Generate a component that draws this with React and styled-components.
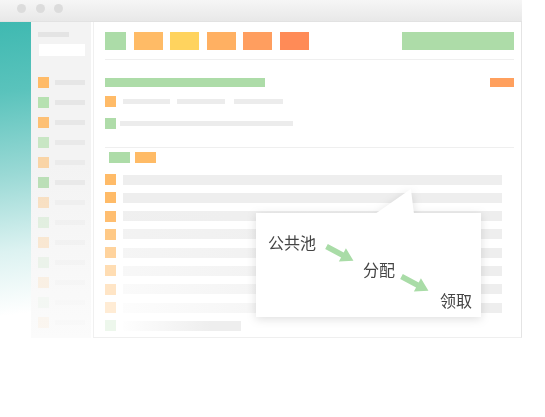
import React from "react";
import styled, { createGlobalStyle } from "styled-components";

const Global = createGlobalStyle`
  html, body { margin: 0; padding: 0; background: #fff; }
  body { font-family: "Noto Sans CJK SC", "Noto Sans", sans-serif; }
`;

const Window = styled.div`
  position: relative;
  width: 522px;
  height: 338px;
  display: flex;
  flex-direction: column;
`;

const TitleBar = styled.div`
  flex: none;
  height: 22px;
  box-sizing: border-box;
  display: flex;
  align-items: flex-start;
  gap: 9.5px;
  padding: 4px 0 0 17px;
  background: linear-gradient(#f6f6f6, #e8e8e8);
  border-bottom: 1px solid #e2e2e2;
`;

const Dot = styled.span`
  width: 9px;
  height: 9px;
  border-radius: 50%;
  background: #dcdcdc;
`;

const Body = styled.div`
  flex: 1;
  display: flex;
  min-height: 0;
`;

const Teal = styled.div`
  width: 31px;
  flex: none;
  background: linear-gradient(172deg, #3fb9b1 0%, #5ac3bc 22%, #9ad9d5 48%, #dcf2f1 72%, #ffffff 92%);
`;

const Sidebar = styled.div`
  width: 60px;
  flex: none;
  box-sizing: border-box;
  padding: 10px 6px 0 7px;
  display: flex;
  flex-direction: column;
  background: linear-gradient(#f3f3f3 45%, #fbfbfb 100%);
`;

const SideLabel = styled.div`
  width: 31px;
  height: 5px;
  background: #e4e4e4;
`;

const SideInput = styled.div`
  width: 46px;
  height: 12px;
  margin: 7px 0 0 1px;
  background: #fff;
`;

const SideList = styled.div`
  margin-top: 21px;
  display: flex;
  flex-direction: column;
  gap: 9px;
`;

const SideItem = styled.div`
  display: flex;
  align-items: center;
  gap: 6px;
  height: 11px;
  opacity: ${(p) => p.$alpha};
`;

const Square = styled.span`
  flex: none;
  width: 11px;
  height: 11px;
  background: ${(p) => p.$color};
  opacity: ${(p) => (p.$alpha == null ? 1 : p.$alpha)};
`;

const SideLine = styled.span`
  width: 30px;
  height: 5px;
  background: #e6e6e6;
`;

const Content = styled.div`
  flex: 1;
  margin-left: 2px;
  box-sizing: border-box;
  background: #fff;
  border-left: 1px solid #f0f0f0;
  border-right: 1px solid #e4e4e4;
  border-bottom: 1px solid #efefef;
  padding: 10px 7px 0 11px;
  display: flex;
  flex-direction: column;
`;

const Toolbar = styled.div`
  display: flex;
  gap: 7.5px;
  height: 18px;
`;

const ToolButton = styled.span`
  width: ${(p) => p.$w}px;
  height: 18px;
  background: ${(p) => p.$color};
  margin-left: ${(p) => (p.$push ? "auto" : "0")};
`;

const Divider = styled.div`
  height: 1px;
  background: #efefef;
  margin-top: ${(p) => p.$mt}px;
`;

const SummaryRow = styled.div`
  display: flex;
  justify-content: space-between;
  margin-top: 18px;
  height: 9px;
`;

const Bar = styled.span`
  width: ${(p) => p.$w}px;
  height: ${(p) => p.$h || 9}px;
  background: ${(p) => p.$color};
`;

const InfoRow = styled.div`
  display: flex;
  align-items: center;
  height: 11px;
  margin-top: ${(p) => p.$mt}px;
  gap: ${(p) => p.$gap}px;
`;

const InfoLine = styled.span`
  width: ${(p) => p.$w}px;
  height: 5px;
  background: #ececec;
  margin-left: ${(p) => p.$ml || 0}px;
`;

const Tabs = styled.div`
  display: flex;
  gap: 5px;
  margin-top: 4px;
  padding-left: 4px;
`;

const Tab = styled.span`
  width: 21px;
  height: 11px;
  background: ${(p) => p.$color};
`;

const List = styled.div`
  margin-top: 11px;
  display: flex;
  flex-direction: column;
  gap: 7.3px;
`;

const ListRow = styled.div`
  display: flex;
  align-items: center;
  gap: 7px;
  height: 11px;
`;

const ListBar = styled.span`
  width: ${(p) => p.$w || 379}px;
  height: 10px;
  background: ${(p) =>
    `linear-gradient(to right, rgba(238,238,238,${p.$alpha}) 0%, #eeeeee 75%)`};
`;

const Popup = styled.div`
  position: absolute;
  left: 256px;
  top: 213px;
  width: 225px;
  height: 104px;
  box-sizing: border-box;
  background: #fff;
  filter: drop-shadow(0 2px 5px rgba(0, 0, 0, 0.13));
  padding: 19px 0 0 12px;
  display: flex;
  flex-direction: column;

  &::before {
    content: "";
    position: absolute;
    left: 119px;
    top: -24px;
    width: 39px;
    height: 25px;
    background: #fff;
    clip-path: polygon(0 100%, 92% 0, 100% 100%);
  }
`;

const Step = styled.div`
  display: flex;
  align-items: flex-start;
  height: 20px;
  margin-left: ${(p) => p.$ml}px;
  margin-top: ${(p) => p.$mt}px;
`;

const StepText = styled.span`
  font-size: 16px;
  line-height: 20px;
  color: #444;
  white-space: nowrap;
`;

const ArrowSvg = styled.svg`
  flex: none;
  overflow: visible;
  margin-left: ${(p) => p.$ml}px;
  margin-top: ${(p) => p.$mt}px;
`;

function Arrow({ ml, mt }) {
  return (
    <ArrowSvg $ml={ml} $mt={mt} width="31" height="19" viewBox="0 0 31 19">
      <g transform="translate(1.5 2.5) rotate(28)">
        <polygon
          points="0,-2.8 18,-2.8 18,-7.5 30.5,0 18,7.5 18,2.8 0,2.8"
          fill="#a9dca7"
        />
      </g>
    </ArrowSvg>
  );
}

const GREEN = "#afdca9";
const ORANGE = "#ffbb68";

const sideItems = [
  [ORANGE, 1],
  ["#b6e1b1", 1],
  [ORANGE, 0.9],
  ["#b6e1b1", 0.7],
  [ORANGE, 0.55],
  ["#a8d9a3", 0.75],
  [ORANGE, 0.35],
  ["#b6e1b1", 0.3],
  [ORANGE, 0.25],
  ["#b6e1b1", 0.18],
  [ORANGE, 0.14],
  ["#b6e1b1", 0.08],
  [ORANGE, 0.07],
];

const listRows = [
  [ORANGE, 1, 1],
  [ORANGE, 1, 1],
  [ORANGE, 0.95, 0.9],
  [ORANGE, 0.8, 0.75],
  [ORANGE, 0.65, 0.6],
  [ORANGE, 0.5, 0.45],
  [ORANGE, 0.38, 0.3],
  [ORANGE, 0.28, 0.15],
  [GREEN, 0.22, 0.05, 118],
];

export default function App() {
  return (
    <>
      <Global />
      <Window>
        <TitleBar>
          <Dot />
          <Dot />
          <Dot />
        </TitleBar>
        <Body>
          <Teal />
          <Sidebar>
            <SideLabel />
            <SideInput />
            <SideList>
              {sideItems.map(([c, a], i) => (
                <SideItem key={i} $alpha={a}>
                  <Square $color={c} />
                  <SideLine />
                </SideItem>
              ))}
            </SideList>
          </Sidebar>
          <Content>
            <Toolbar>
              <ToolButton $w={21} $color="#acdca8" />
              <ToolButton $w={29} $color="#ffbb66" />
              <ToolButton $w={29} $color="#ffd35e" />
              <ToolButton $w={29} $color="#ffb062" />
              <ToolButton $w={29} $color="#ff9e5f" />
              <ToolButton $w={29} $color="#ff8b57" />
              <ToolButton $w={112} $color="#addca8" $push />
            </Toolbar>
            <Divider $mt={9} />
            <SummaryRow>
              <Bar $w={160} $color="#addca8" />
              <Bar $w={24} $color="#ffa05e" />
            </SummaryRow>
            <InfoRow $mt={9} $gap={7}>
              <Square $color={ORANGE} />
              <InfoLine $w={47} />
              <InfoLine $w={48} />
              <InfoLine $w={49} $ml={2} />
            </InfoRow>
            <InfoRow $mt={11} $gap={4}>
              <Square $color={GREEN} />
              <InfoLine $w={173} />
            </InfoRow>
            <Divider $mt={18} />
            <Tabs>
              <Tab $color="#addca8" />
              <Tab $color="#ffbb66" />
            </Tabs>
            <List>
              {listRows.map(([c, a, b, w], i) => (
                <ListRow key={i}>
                  <Square $color={c} $alpha={a} />
                  <ListBar $alpha={b} $w={w} />
                </ListRow>
              ))}
            </List>
          </Content>
        </Body>
        <Popup>
          <Step $ml={0} $mt={0}>
            <StepText>公共池</StepText>
            <Arrow ml={9} mt={12} />
          </Step>
          <Step $ml={95} $mt={7}>
            <StepText>分配</StepText>
            <Arrow ml={5} mt={15} />
          </Step>
          <Step $ml={172} $mt={11}>
            <StepText>领取</StepText>
          </Step>
        </Popup>
      </Window>
    </>
  );
}
